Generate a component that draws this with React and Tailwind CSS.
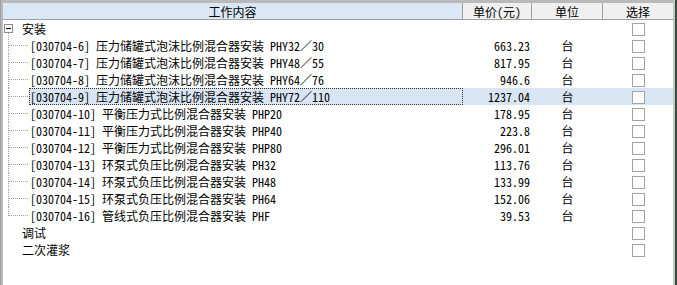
import React from 'react';

const items = [
  ['[030704-6] 压力储罐式泡沫比例混合器安装 PHY32／30', '663.23'],
  ['[030704-7] 压力储罐式泡沫比例混合器安装 PHY48／55', '817.95'],
  ['[030704-8] 压力储罐式泡沫比例混合器安装 PHY64／76', '946.6'],
  ['[030704-9] 压力储罐式泡沫比例混合器安装 PHY72／110', '1237.04'],
  ['[030704-10] 平衡压力式比例混合器安装 PHP20', '178.95'],
  ['[030704-11] 平衡压力式比例混合器安装 PHP40', '223.8'],
  ['[030704-12] 平衡压力式比例混合器安装 PHP80', '296.01'],
  ['[030704-13] 环泵式负压比例混合器安装 PH32', '113.76'],
  ['[030704-14] 环泵式负压比例混合器安装 PH48', '133.99'],
  ['[030704-15] 环泵式负压比例混合器安装 PH64', '152.06'],
  ['[030704-16] 管线式负压比例混合器安装 PHF', '39.53'],
];

const SELECTED = 3;

function Checkbox() {
  return <div className="w-[13px] h-[13px] border border-[#a3a3a3] bg-white mt-[3px]" />;
}

function TreeLines({ last }) {
  return (
    <svg width="26" height="17" className="shrink-0">
      <line x1="5.5" y1="0" x2="5.5" y2={last ? 9 : 17} stroke="#a0a0a0" strokeDasharray="1 1" />
      <line x1="6" y1="8.5" x2="26" y2="8.5" stroke="#a0a0a0" strokeDasharray="1 1" />
    </svg>
  );
}

function GroupNode({ expanded }) {
  return (
    <svg width="18" height="17" className="shrink-0">
      {expanded && (
        <>
          <rect x="1.5" y="4.5" width="8" height="8" fill="white" stroke="#8c8c8c" />
          <line x1="3" y1="8.5" x2="8" y2="8.5" stroke="#000" />
          <line x1="5.5" y1="13" x2="5.5" y2="17" stroke="#a0a0a0" strokeDasharray="1 1" />
        </>
      )}
    </svg>
  );
}

function Row({ tree, text, price, unit, selected, group }) {
  const hl = selected ? 'bg-[#d9e5f3]' : '';
  return (
    <div className="flex h-[17px]">
      <div className="flex w-[460px]">
        {tree}
        <div
          className={`flex-1 flex items-center border whitespace-nowrap ${
            selected ? 'border-dotted border-[#333] bg-[#d9e5f3]' : 'border-transparent'
          } ${group ? 'pl-0' : ''}`}
        >
          {text}
        </div>
      </div>
      <div className={`w-[69px] flex items-center justify-end pr-[2px] ${hl}`}>{price}</div>
      <div className={`w-[71px] flex items-center justify-center ${hl}`}>{unit}</div>
      <div className={`w-[70px] flex justify-center ${hl}`}>
        <Checkbox />
      </div>
    </div>
  );
}

export default function App() {
  return (
    <div className="flex w-[677px] h-[285px] bg-white text-[12px] leading-[17px] text-black font-['Noto_Sans_Mono_CJK_SC','Noto_Sans_CJK_SC',monospace]">
      <div className="w-[3px] shrink-0 bg-[#b9b9b9] border-l border-[#a0a0a0]" />
      <div className="flex flex-col w-[670px]">
        <div className="h-[3px] bg-[#b9b9b9]" />
        <div className="flex h-[17px] border-b border-[#a0a0a0]">
          <div className="w-[460px] bg-[#dae7f5] flex items-center justify-center border-r border-[#a0a0a0]">工作内容</div>
          <div className="w-[69px] bg-[#f0f0f0] flex items-center justify-center border-r border-[#a0a0a0]">单价(元)</div>
          <div className="w-[71px] bg-[#f0f0f0] flex items-center justify-center border-r border-[#a0a0a0]">单位</div>
          <div className="w-[70px] bg-[#f0f0f0] flex items-center justify-center">选择</div>
        </div>
        <Row tree={<GroupNode expanded />} text="安装" group />
        {items.map(([t, p], i) => (
          <Row
            key={t}
            tree={<TreeLines last={i === items.length - 1} />}
            text={t}
            price={p}
            unit="台"
            selected={i === SELECTED}
          />
        ))}
        <Row tree={<GroupNode />} text="调试" group />
        <Row tree={<GroupNode />} text="二次灌浆" group />
      </div>
      <div className="w-[4px] shrink-0 flex">
        <div className="w-[2px] bg-[#c8c8c8]" />
        <div className="w-[2px] bg-[#3c4a42]" />
      </div>
    </div>
  );
}
